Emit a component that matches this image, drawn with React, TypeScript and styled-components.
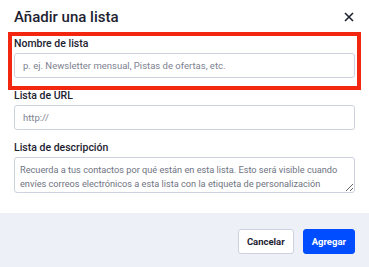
import React from "react";
import styled, { createGlobalStyle } from "styled-components";

const GlobalStyle = createGlobalStyle`
  html, body {
    margin: 0;
    padding: 0;
    background: #ffffff;
  }
  body {
    font-family: Roboto, "Liberation Sans", sans-serif;
    color: #1d2230;
  }
`;

const fields = [
  { id: "name", label: "Nombre de lista", placeholder: "p. ej. Newsletter mensual, Pistas de ofertas, etc." },
  { id: "url", label: "Lista de URL", placeholder: "http://" }
];

const App: React.FC = () => (
  <>
    <GlobalStyle />
    <Modal>
      <Header>
        <Title>Añadir una lista</Title>
        <CloseButton aria-label="Cerrar">
          <svg width="10" height="10" viewBox="0 0 10 10">
            <path d="M1 1L9 9M9 1L1 9" stroke="#1d2230" strokeWidth="1.6" />
          </svg>
        </CloseButton>
      </Header>
      <Body>
        {fields.map((f) => (
          <Field key={f.id}>
            <Label htmlFor={f.id}>{f.label}</Label>
            <Input id={f.id} placeholder={f.placeholder} />
          </Field>
        ))}
        <Field>
          <Label htmlFor="desc">Lista de descripción</Label>
          <TextArea
            id="desc"
            placeholder="Recuerda a tus contactos por qué están en esta lista. Esto será visible cuando envíes correos electrónicos a esta lista con la etiqueta de personalización"
          />
        </Field>
      </Body>
      <Footer>
        <Button>Cancelar</Button>
        <Button $primary>Agregar</Button>
      </Footer>
      <Highlight />
    </Modal>
  </>
);

export default App;

const Modal = styled.div`
  position: relative;
  width: 369px;
  height: 267px;
  background: #ffffff;
  overflow: hidden;
`;

const Header = styled.header`
  display: flex;
  align-items: center;
  justify-content: space-between;
  height: 34px;
  padding: 0 14px;
  box-sizing: border-box;
`;

const Title = styled.h2`
  margin: 0;
  font-size: 15px;
  font-weight: 500;
  color: #1d2230;
`;

const CloseButton = styled.button`
  display: flex;
  align-items: center;
  justify-content: center;
  width: 12px;
  height: 12px;
  padding: 0;
  border: none;
  background: none;
`;

const Body = styled.div`
  display: flex;
  flex-direction: column;
  gap: 11px;
  padding: 3px 14px 20px;
`;

const Field = styled.div`
  display: flex;
  flex-direction: column;
`;

const Label = styled.label`
  font-size: 10.5px;
  line-height: 14px;
  font-weight: 500;
  color: #1d2230;
  margin-bottom: 2px;
`;

const Input = styled.input`
  height: 25px;
  box-sizing: border-box;
  border: 1px solid #cdd2de;
  border-radius: 3px;
  padding: 0 8px;
  font-family: inherit;
  font-size: 9.5px;
  outline: none;

  &::placeholder {
    color: #7d8290;
  }
`;

const TextArea = styled.textarea`
  height: 36px;
  box-sizing: border-box;
  border: 1px solid #cdd2de;
  border-radius: 3px;
  padding: 5px 5px 0;
  font-family: inherit;
  font-size: 9.2px;
  line-height: 13.5px;
  resize: vertical;
  outline: none;
  overflow: hidden;

  &::placeholder {
    color: #6f7482;
  }
`;

const Footer = styled.footer`
  display: flex;
  justify-content: flex-end;
  gap: 9px;
  padding: 16px 14px;
  background: #edf0f7;
`;

const Button = styled.button<{ $primary?: boolean }>`
  height: 25px;
  padding: 0 8px;
  border-radius: 3px;
  font-family: inherit;
  font-size: 9.5px;
  font-weight: 700;
  border: 1px solid ${(p) => (p.$primary ? "#004cff" : "#cdd2de")};
  background: ${(p) => (p.$primary ? "#004cff" : "#ffffff")};
  color: ${(p) => (p.$primary ? "#ffffff" : "#1d2230")};
`;

const Highlight = styled.div`
  position: absolute;
  left: 8px;
  top: 32px;
  width: 353px;
  height: 58px;
  box-sizing: border-box;
  border: 4px solid #f3260f;
  pointer-events: none;
`;
